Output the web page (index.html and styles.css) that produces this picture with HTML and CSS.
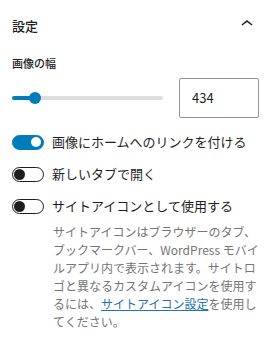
FILE: index.html
```html
<!DOCTYPE html>
<html lang="ja">
<head>
<meta charset="utf-8">
<link rel="stylesheet" href="styles.css">
</head>
<body>
<div class="panel">
  <div class="header">
    <span class="title">設定</span>
    <svg class="chevron" width="24" height="24" viewBox="0 0 24 24"><path d="M6.5 12.4L12 8l5.5 4.4-.9 1.2L12 10l-4.6 3.6-1-1.2z" fill="#1e1e1e"/></svg>
  </div>
  <div class="label">画像の幅</div>
  <div class="range-row">
    <div class="slider">
      <div class="track"></div>
      <div class="fill"></div>
      <div class="thumb"></div>
    </div>
    <div class="number">434</div>
  </div>
  <div class="toggles">
    <div class="toggle-row">
      <span class="toggle on"><span class="knob"></span></span>
      <span class="toggle-label">画像にホームへのリンクを付ける</span>
    </div>
    <div class="toggle-row">
      <span class="toggle"><span class="knob"></span></span>
      <span class="toggle-label">新しいタブで開く</span>
    </div>
    <div class="toggle-row">
      <span class="toggle"><span class="knob"></span></span>
      <span class="toggle-label">サイトアイコンとして使用する</span>
    </div>
  </div>
  <p class="help">サイトアイコンはブラウザーのタブ、ブックマークバー、WordPress モバイルアプリ内で表示されます。サイトロゴと異なるカスタムアイコンを使用するには、<a href="#" class="link">サイトアイコン設定</a>を使用してください。</p>
</div>
</body>
</html>
```
FILE: styles.css
```css
html, body {
  margin: 0;
  padding: 0;
  background: #ffffff;
}
body {
  font-family: "Noto Sans CJK JP", "Noto Sans", sans-serif;
  color: #1e1e1e;
}
.panel {
  padding: 0 8px 0 12px;
}
.header {
  display: flex;
  justify-content: space-between;
  align-items: flex-start;
  padding-top: 16px;
}
.title {
  font-size: 13px;
  line-height: 20px;
  font-weight: 500;
}
.chevron {
  margin-top: -4px;
  display: block;
}
.label {
  margin-top: 19px;
  font-size: 11px;
  line-height: 16px;
  font-weight: 500;
}
.range-row {
  margin-top: 7px;
  display: flex;
  align-items: center;
  gap: 16px;
  height: 40px;
}
.slider {
  flex: 1;
  position: relative;
  height: 12px;
}
.track {
  position: absolute;
  left: 0;
  right: 0;
  top: 4px;
  height: 4px;
  border-radius: 2px;
  background: #dddddd;
}
.fill {
  position: absolute;
  left: 0;
  width: 24px;
  top: 4px;
  height: 4px;
  border-radius: 2px;
  background: #007cba;
}
.thumb {
  position: absolute;
  left: 17px;
  top: 0;
  width: 12px;
  height: 12px;
  border-radius: 50%;
  background: #007cba;
}
.number {
  box-sizing: border-box;
  width: 80px;
  height: 40px;
  border: 1px solid #949494;
  border-radius: 2px;
  padding-left: 12px;
  font-size: 13px;
  line-height: 38px;
}
.toggles {
  margin-top: 14px;
  display: flex;
  flex-direction: column;
  gap: 12px;
}
.toggle-row {
  display: flex;
  align-items: center;
  gap: 8px;
  height: 20px;
}
.toggle {
  box-sizing: border-box;
  position: relative;
  width: 32px;
  height: 15px;
  border-radius: 8px;
  border: 1px solid #1e1e1e;
  background: #ffffff;
  flex-shrink: 0;
}
.toggle .knob {
  position: absolute;
  top: 1px;
  left: 1px;
  width: 11px;
  height: 11px;
  border-radius: 50%;
  background: #1e1e1e;
}
.toggle.on {
  background: #007cba;
  border-color: #007cba;
}
.toggle.on .knob {
  left: auto;
  right: 2px;
  top: 1.5px;
  width: 10px;
  height: 10px;
  background: #ffffff;
}
.toggle-label {
  font-size: 13px;
  line-height: 20px;
}
.help {
  margin: 7px 0 0 41px;
  font-size: 12px;
  line-height: 18px;
  color: #757575;
}
.link {
  color: #2271b1;
  text-decoration: underline;
}
```
